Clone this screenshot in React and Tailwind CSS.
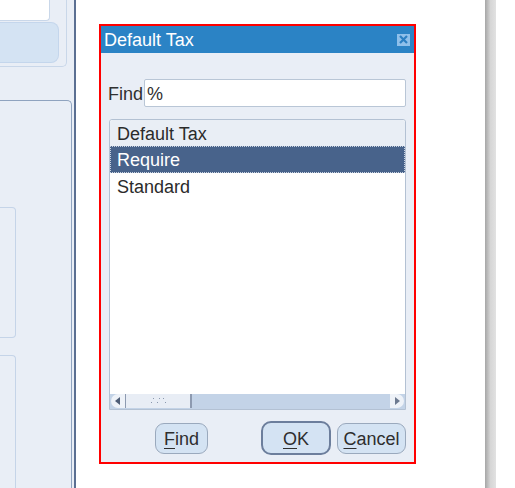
import React from "react";

const font = { fontFamily: '"Liberation Sans", Arial, sans-serif' };

const LeftPane = () => (
  <div className="w-[76px] h-full bg-[#e9eef6] border-r-2 border-[#5b6f92] flex flex-col overflow-hidden">
    <div className="w-[67px] h-[67px] border-r border-b border-[#c9d7e9] rounded-br-[5px] flex flex-col">
      <div className="w-[50px] h-[21px] bg-white border-r border-b border-[#c9d7e9] rounded-br-[4px]" />
      <div className="w-[59px] h-[41px] mt-[1px] bg-[#d4e3f3] border border-l-0 border-[#c4d6ec] rounded-r-[8px]" />
    </div>
    <div className="mt-[33px] w-[72px] flex-1 border-t border-r border-[#8fa3bf] rounded-tr-[5px] flex flex-col">
      <div className="mt-[106px] w-[16px] h-[131px] border-t border-r border-b border-[#c5d4e8] rounded-r-[4px]" />
      <div className="mt-[17px] w-[16px] flex-1 border-t border-r border-[#c5d4e8] rounded-tr-[4px]" />
    </div>
  </div>
);

const Btn = ({ first, rest, className }) => (
  <button
    className={`bg-[#d4e3f3] rounded-[9px] text-[18px] text-[#2e2e2e] leading-none flex items-center justify-center pt-[1px] ${className}`}
  >
    <span className="underline underline-offset-[3px] decoration-1">{first}</span>
    {rest}
  </button>
);

const Dialog = () => (
  <div className="w-[317px] h-[440px] border-2 border-[#ff0000] bg-[#e9eef6] flex flex-col">
    <div className="h-[27px] bg-[#2b83c5] flex items-center pl-[3px] pr-[4px]">
      <span className="text-white text-[18px] leading-none pt-[1px]">Default Tax</span>
      <div className="ml-auto w-[13px] h-[12px] bg-[#8fc0ea] flex items-center justify-center">
        <svg width="9" height="9" viewBox="0 0 9 9">
          <path d="M1 1 L8 8 M8 1 L1 8" stroke="#2b7fc2" strokeWidth="2.2" />
        </svg>
      </div>
    </div>

    <div className="flex items-center mt-[26px] pl-[7px]">
      <span className="text-[18px] text-[#303030] leading-none pt-[2px]">Find</span>
      <div className="ml-[1px] w-[262px] h-[28px] bg-white border border-[#b9c6d6] rounded-[2px] flex items-center pl-[2px] pt-[2px] text-[18px] text-[#303030]">
        %
      </div>
    </div>

    <div className="ml-[8px] mt-[12px] w-[297px] h-[291px] bg-white border border-[#b3c1d3] rounded-t-[3px] flex flex-col text-[18px] text-[#2b2b2b]">
      <div className="h-[26px] bg-[#e9eef5] flex items-center pl-[7px] pt-[2px] rounded-t-[3px]">Default Tax</div>
      <div className="h-[27px] bg-[#48638b] text-white flex items-center pl-[6px] pt-[2px] border border-dotted border-[#c9d2e0]">Require</div>
      <div className="h-[26px] flex items-center pl-[7px] pt-[2px]">Standard</div>
      <div className="flex-1" />
      <div className="h-[15px] bg-[#c3d3e7] flex items-stretch px-[1px] pb-[1px]">
        <div className="w-[15px] bg-[#eef2f8] rounded-l-[7px] flex items-center justify-center border-r border-[#8d9ab0]">
          <svg width="6" height="8" viewBox="0 0 6 8"><path d="M5 0 L0 4 L5 8 Z" fill="#4e5d76" /></svg>
        </div>
        <div className="w-[66px] bg-[#e8edf5] border-r-2 border-[#8d9ab0] flex items-center justify-center">
          <svg width="20" height="8" viewBox="0 0 20 8">
            <g fill="#8a98ae">
              <rect x="5" y="1" width="1" height="1" /><rect x="3" y="5" width="1" height="1" />
              <rect x="11" y="1" width="1" height="1" /><rect x="9" y="5" width="1" height="1" />
              <rect x="17" y="5" width="1" height="1" /><rect x="15" y="1" width="1" height="1" />
            </g>
          </svg>
        </div>
        <div className="flex-1" />
        <div className="w-[14px] bg-[#eef2f8] rounded-r-[7px] flex items-center justify-center">
          <svg width="6" height="8" viewBox="0 0 6 8"><path d="M1 0 L6 4 L1 8 Z" fill="#6d7a90" /></svg>
        </div>
      </div>
    </div>

    <div className="flex items-center mt-[11px] pl-[54px]">
      <Btn first="F" rest="ind" className="w-[53px] h-[31px] border border-[#9aa9bd]" />
      <Btn first="O" rest="K" className="ml-[53px] w-[70px] h-[34px] border-2 border-[#6c7e9c] rounded-[10px]" />
      <Btn first="C" rest="ancel" className="ml-[6px] w-[69px] h-[31px] border border-[#9aa9bd]" />
    </div>
  </div>
);

const App = () => {
  return (
    <div className="w-[515px] h-[488px] flex bg-white overflow-hidden" style={font}>
      <LeftPane />
      <div className="w-[409px] h-full bg-white pl-[23px] pt-[24px]">
        <Dialog />
      </div>
      <div className="w-[11px] h-full bg-gradient-to-r from-[#a6a6a6] via-[#d6d6d6] to-[#e2e2e2]" />
      <div className="flex-1 bg-white" />
    </div>
  );
};

export default App;
